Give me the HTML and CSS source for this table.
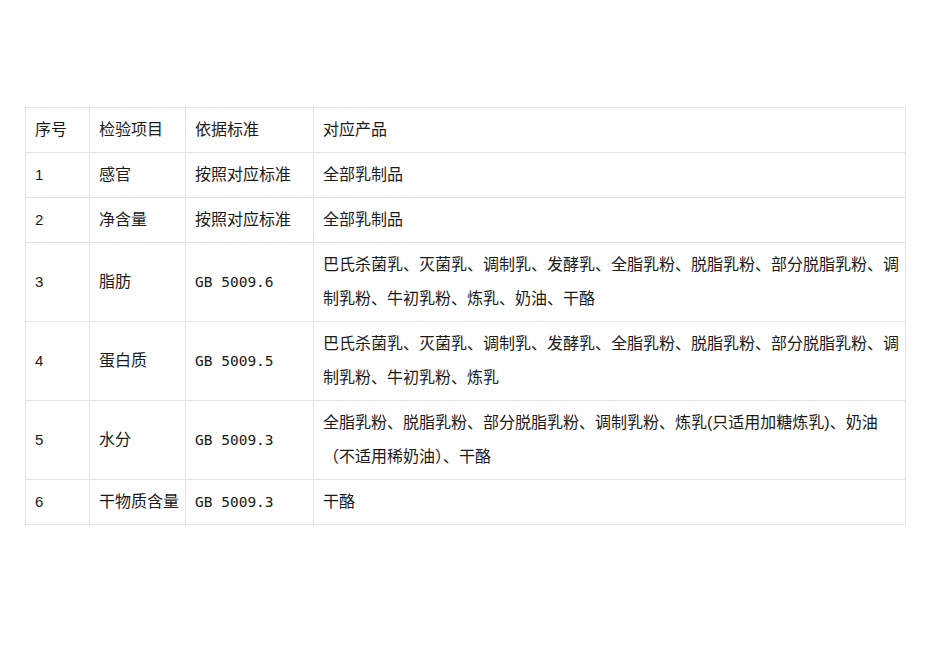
FILE: index.html
```html
<!DOCTYPE html>
<html lang="zh-CN">
<head>
<meta charset="utf-8">
<title>检验项目</title>
<link rel="stylesheet" href="styles.css">
</head>
<body>
<div class="page">
  <table class="grid">
    <colgroup>
      <col class="c-no">
      <col class="c-item">
      <col class="c-std">
      <col class="c-prod">
    </colgroup>
    <tbody>
      <tr>
        <td>序号</td><td>检验项目</td><td>依据标准</td><td>对应产品</td>
      </tr>
      <tr>
        <td class="num">1</td><td>感官</td><td>按照对应标准</td><td>全部乳制品</td>
      </tr>
      <tr>
        <td class="num">2</td><td>净含量</td><td>按照对应标准</td><td>全部乳制品</td>
      </tr>
      <tr>
        <td class="num">3</td><td>脂肪</td><td class="code">GB 5009.6</td>
        <td class="prod">巴氏杀菌乳、灭菌乳、调制乳、发酵乳、全脂乳粉、脱脂乳粉、部分脱脂乳粉、调<br>制乳粉、牛初乳粉、炼乳、奶油、干酪</td>
      </tr>
      <tr>
        <td class="num">4</td><td>蛋白质</td><td class="code">GB 5009.5</td>
        <td class="prod">巴氏杀菌乳、灭菌乳、调制乳、发酵乳、全脂乳粉、脱脂乳粉、部分脱脂乳粉、调<br>制乳粉、牛初乳粉、炼乳</td>
      </tr>
      <tr>
        <td class="num">5</td><td>水分</td><td class="code">GB 5009.3</td>
        <td class="prod">全脂乳粉、脱脂乳粉、部分脱脂乳粉、调制乳粉、炼乳(只适用加糖炼乳)、奶油<br>（不适用稀奶油）、干酪</td>
      </tr>
      <tr>
        <td class="num">6</td><td>干物质含量</td><td class="code">GB 5009.3</td><td>干酪</td>
      </tr>
    </tbody>
  </table>
</div>
</body>
</html>
```

FILE: styles.css
```css
html, body {
  margin: 0;
  padding: 0;
  background: #ffffff;
}

.page {
  padding: 107px 0 0 25px;
}

.grid {
  border-collapse: collapse;
  table-layout: fixed;
  width: 881px;
  font-family: "Liberation Sans", "Noto Sans CJK SC", sans-serif;
  font-size: 16px;
  color: #1a1a1a;
}

.c-no { width: 64px; }
.c-item { width: 96px; }
.c-std { width: 128px; }
.c-prod { width: 592px; }

.grid td {
  border: 1px solid #e4e4e4;
  padding: 5px 8px 5px 9px;
  line-height: 34px;
  vertical-align: middle;
  text-align: left;
  white-space: nowrap;
}

.grid td.num {
  font-size: 15px;
}

.grid td.code {
  font-family: "DejaVu Sans Mono", "Liberation Mono", monospace;
  font-size: 14.5px;
}
```
